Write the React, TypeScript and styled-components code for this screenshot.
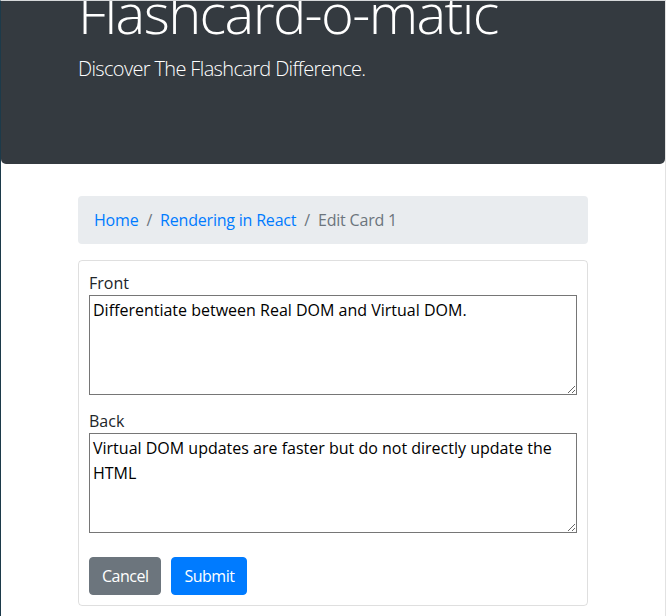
import React from "react";
import styled, { createGlobalStyle } from "styled-components";

const GlobalStyle = createGlobalStyle`
  *, *::before, *::after { box-sizing: border-box; }
  body {
    margin: 0;
    background: #fff;
    color: #212529;
    font-family: "Open Sans", "Noto Sans", "Liberation Sans", sans-serif;
    font-size: 16px;
    line-height: 1.5;
  }
`;

const Frame = styled.div`
  width: 666px;
  min-height: 616px;
  border-top: 1px solid #d6d8da;
  border-left: 1px solid #1c3a4a;
  border-right: 1px solid #e2e2e2;
  overflow: hidden;
`;

const Container = styled.div`
  max-width: 540px;
  margin: 0 auto;
  padding: 0 15px;
`;

const Jumbotron = styled.header`
  margin-top: -86px;
  margin-bottom: 32px;
  padding: 64px 0;
  background: #343a40;
  color: #fff;
  border-radius: 5px;
`;

const Title = styled.h1`
  margin: 0 0 8px;
  font-size: 56px;
  font-weight: 300;
  line-height: 1.2;
  letter-spacing: -1.6px;
`;

const Lead = styled.p`
  margin: 0 0 16px;
  font-size: 20px;
  font-weight: 300;
  letter-spacing: -0.65px;
`;

const Breadcrumb = styled.ol`
  display: flex;
  flex-wrap: wrap;
  list-style: none;
  margin: 0 0 16px;
  padding: 12px 16px;
  background: #e9ecef;
  border-radius: 4px;
  letter-spacing: -0.2px;
`;

const Crumb = styled.li<{ $active?: boolean }>`
  color: ${(p) => (p.$active ? "#6c757d" : "#007bff")};
  &:not(:first-child)::before {
    content: "/";
    display: inline-block;
    padding: 0 8px;
    color: #6c757d;
  }
`;

const CrumbLink = styled.a`
  color: #007bff;
  text-decoration: none;
`;

const Card = styled.div`
  border: 1px solid rgba(0, 0, 0, 0.125);
  border-radius: 4px;
  margin-bottom: 16px;
`;

const CardBody = styled.form`
  padding: 10px;
`;

const Field = styled.div`
  & + & {
    margin-top: 14px;
  }
`;

const Label = styled.label`
  display: block;
`;

const TextArea = styled.textarea`
  display: block;
  width: 100%;
  height: 100px;
  margin: 0;
  padding: 2px 3px;
  border: 1px solid #767676;
  border-radius: 0;
  font-family: inherit;
  font-size: 16px;
  line-height: 1.55;
  color: #000;
  background: #fff;
  resize: vertical;
`;

const Actions = styled.div`
  display: flex;
  gap: 10px;
  margin-top: 24px;
`;

const Button = styled.button<{ $variant: "secondary" | "primary" }>`
  padding: 6px 12px;
  border: 1px solid ${(p) => (p.$variant === "primary" ? "#007bff" : "#6c757d")};
  border-radius: 4px;
  background: ${(p) => (p.$variant === "primary" ? "#007bff" : "#6c757d")};
  color: #fff;
  font-family: inherit;
  font-size: 16px;
  line-height: 1.5;
  letter-spacing: -0.5px;
  cursor: pointer;
`;

export default function App() {
  return (
    <>
      <GlobalStyle />
      <Frame>
        <Jumbotron>
          <Container>
            <Title>Flashcard-o-matic</Title>
            <Lead>Discover The Flashcard Difference.</Lead>
          </Container>
        </Jumbotron>
        <Container>
          <nav aria-label="breadcrumb">
            <Breadcrumb>
              <Crumb>
                <CrumbLink href="#">Home</CrumbLink>
              </Crumb>
              <Crumb>
                <CrumbLink href="#">Rendering in React</CrumbLink>
              </Crumb>
              <Crumb $active>Edit Card 1</Crumb>
            </Breadcrumb>
          </nav>
          <Card>
            <CardBody onSubmit={(e) => e.preventDefault()}>
              <Field>
                <Label htmlFor="front">Front</Label>
                <TextArea
                  id="front"
                  defaultValue="Differentiate between Real DOM and Virtual DOM."
                />
              </Field>
              <Field>
                <Label htmlFor="back">Back</Label>
                <TextArea
                  id="back"
                  defaultValue="Virtual DOM updates are faster but do not directly update the HTML"
                />
              </Field>
              <Actions>
                <Button type="button" $variant="secondary">Cancel</Button>
                <Button type="submit" $variant="primary">Submit</Button>
              </Actions>
            </CardBody>
          </Card>
        </Container>
      </Frame>
    </>
  );
}
